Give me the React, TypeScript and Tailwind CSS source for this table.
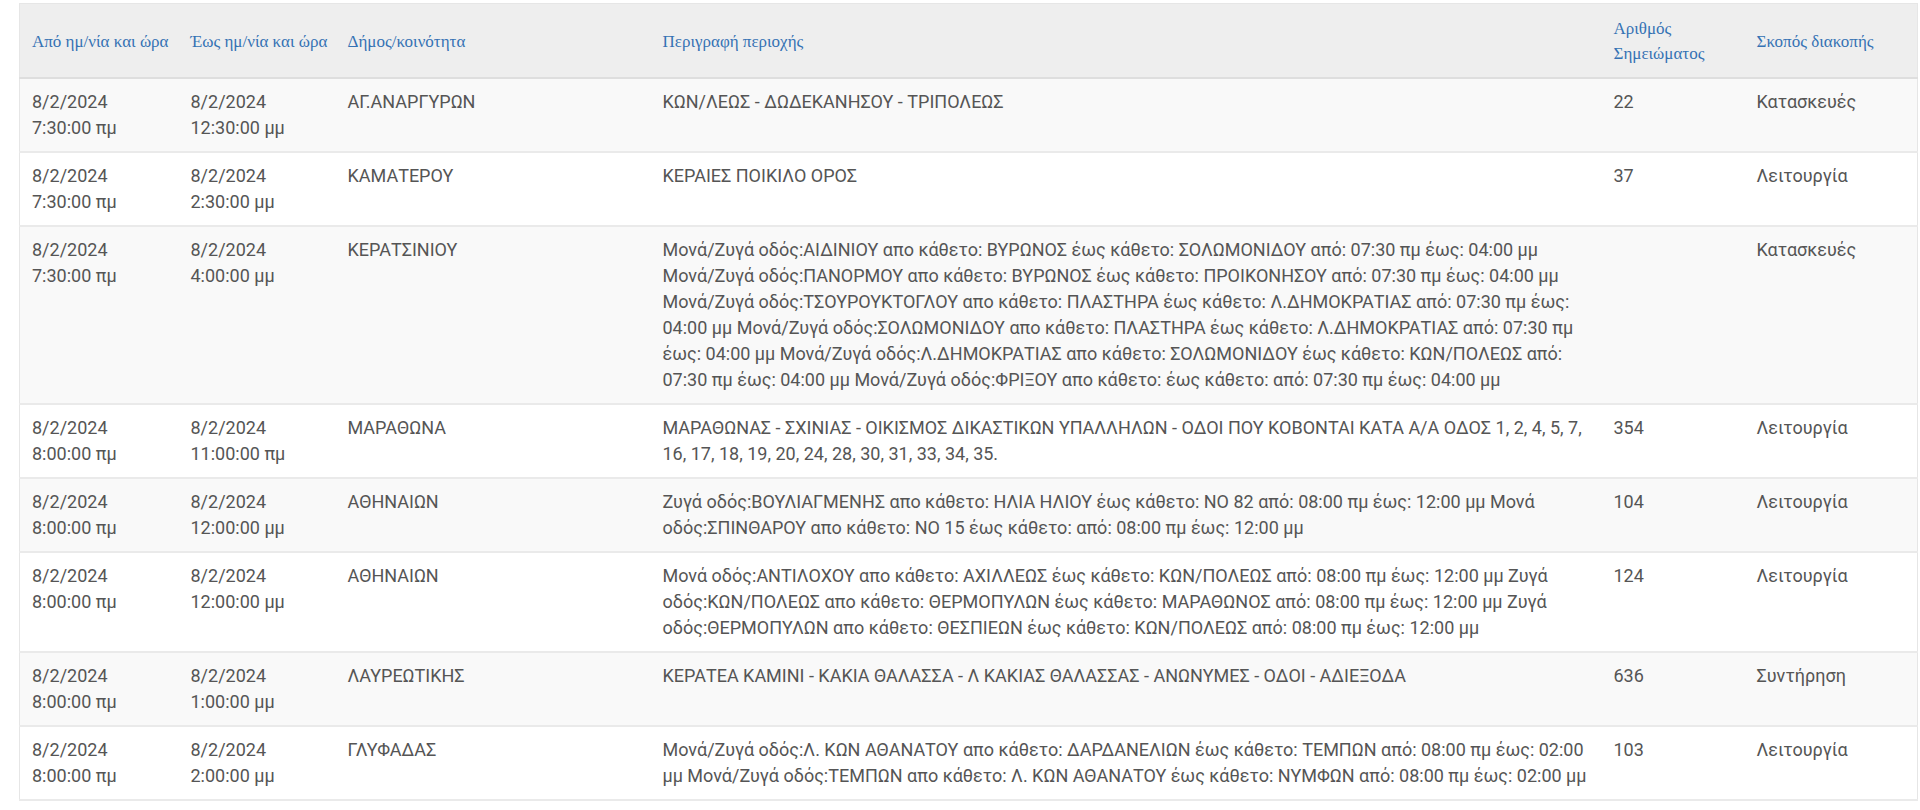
import React from "react";

type Row = {
  from: [string, string];
  to: [string, string];
  dimos: string;
  desc: string;
  num: string;
  purpose: string;
};

const rows: Row[] = [
  {
    from: ["8/2/2024", "7:30:00 πμ"],
    to: ["8/2/2024", "12:30:00 μμ"],
    dimos: "ΑΓ.ΑΝΑΡΓΥΡΩΝ",
    desc: "ΚΩΝ/ΛΕΩΣ - ΔΩΔΕΚΑΝΗΣΟΥ - ΤΡΙΠΟΛΕΩΣ",
    num: "22",
    purpose: "Κατασκευές",
  },
  {
    from: ["8/2/2024", "7:30:00 πμ"],
    to: ["8/2/2024", "2:30:00 μμ"],
    dimos: "ΚΑΜΑΤΕΡΟΥ",
    desc: "ΚΕΡΑΙΕΣ ΠΟΙΚΙΛΟ ΟΡΟΣ",
    num: "37",
    purpose: "Λειτουργία",
  },
  {
    from: ["8/2/2024", "7:30:00 πμ"],
    to: ["8/2/2024", "4:00:00 μμ"],
    dimos: "ΚΕΡΑΤΣΙΝΙΟΥ",
    desc: "Μονά/Ζυγά οδός:ΑΙΔΙΝΙΟΥ απο κάθετο: ΒΥΡΩΝΟΣ έως κάθετο: ΣΟΛΩΜΟΝΙΔΟΥ από: 07:30 πμ έως: 04:00 μμ Μονά/Ζυγά οδός:ΠΑΝΟΡΜΟΥ απο κάθετο: ΒΥΡΩΝΟΣ έως κάθετο: ΠΡΟΙΚΟΝΗΣΟΥ από: 07:30 πμ έως: 04:00 μμ Μονά/Ζυγά οδός:ΤΣΟΥΡΟΥΚΤΟΓΛΟΥ απο κάθετο: ΠΛΑΣΤΗΡΑ έως κάθετο: Λ.ΔΗΜΟΚΡΑΤΙΑΣ από: 07:30 πμ έως: 04:00 μμ Μονά/Ζυγά οδός:ΣΟΛΩΜΟΝΙΔΟΥ απο κάθετο: ΠΛΑΣΤΗΡΑ έως κάθετο: Λ.ΔΗΜΟΚΡΑΤΙΑΣ από: 07:30 πμ έως: 04:00 μμ Μονά/Ζυγά οδός:Λ.ΔΗΜΟΚΡΑΤΙΑΣ απο κάθετο: ΣΟΛΩΜΟΝΙΔΟΥ έως κάθετο: ΚΩΝ/ΠΟΛΕΩΣ από: 07:30 πμ έως: 04:00 μμ Μονά/Ζυγά οδός:ΦΡΙΞΟΥ απο κάθετο: έως κάθετο: από: 07:30 πμ έως: 04:00 μμ",
    num: "",
    purpose: "Κατασκευές",
  },
  {
    from: ["8/2/2024", "8:00:00 πμ"],
    to: ["8/2/2024", "11:00:00 πμ"],
    dimos: "ΜΑΡΑΘΩΝΑ",
    desc: "ΜΑΡΑΘΩΝΑΣ - ΣΧΙΝΙΑΣ - ΟΙΚΙΣΜΟΣ ΔΙΚΑΣΤΙΚΩΝ ΥΠΑΛΛΗΛΩΝ - ΟΔΟΙ ΠΟΥ ΚΟΒΟΝΤΑΙ ΚΑΤΑ Α/Α ΟΔΟΣ 1, 2, 4, 5, 7, 16, 17, 18, 19, 20, 24, 28, 30, 31, 33, 34, 35.",
    num: "354",
    purpose: "Λειτουργία",
  },
  {
    from: ["8/2/2024", "8:00:00 πμ"],
    to: ["8/2/2024", "12:00:00 μμ"],
    dimos: "ΑΘΗΝΑΙΩΝ",
    desc: "Ζυγά οδός:ΒΟΥΛΙΑΓΜΕΝΗΣ απο κάθετο: ΗΛΙΑ ΗΛΙΟΥ έως κάθετο: ΝΟ 82 από: 08:00 πμ έως: 12:00 μμ Μονά οδός:ΣΠΙΝΘΑΡΟΥ απο κάθετο: ΝΟ 15 έως κάθετο: από: 08:00 πμ έως: 12:00 μμ",
    num: "104",
    purpose: "Λειτουργία",
  },
  {
    from: ["8/2/2024", "8:00:00 πμ"],
    to: ["8/2/2024", "12:00:00 μμ"],
    dimos: "ΑΘΗΝΑΙΩΝ",
    desc: "Μονά οδός:ΑΝΤΙΛΟΧΟΥ απο κάθετο: ΑΧΙΛΛΕΩΣ έως κάθετο: ΚΩΝ/ΠΟΛΕΩΣ από: 08:00 πμ έως: 12:00 μμ Ζυγά οδός:ΚΩΝ/ΠΟΛΕΩΣ απο κάθετο: ΘΕΡΜΟΠΥΛΩΝ έως κάθετο: ΜΑΡΑΘΩΝΟΣ από: 08:00 πμ έως: 12:00 μμ Ζυγά οδός:ΘΕΡΜΟΠΥΛΩΝ απο κάθετο: ΘΕΣΠΙΕΩΝ έως κάθετο: ΚΩΝ/ΠΟΛΕΩΣ από: 08:00 πμ έως: 12:00 μμ",
    num: "124",
    purpose: "Λειτουργία",
  },
  {
    from: ["8/2/2024", "8:00:00 πμ"],
    to: ["8/2/2024", "1:00:00 μμ"],
    dimos: "ΛΑΥΡΕΩΤΙΚΗΣ",
    desc: "ΚΕΡΑΤΕΑ ΚΑΜΙΝΙ - ΚΑΚΙΑ ΘΑΛΑΣΣΑ - Λ ΚΑΚΙΑΣ ΘΑΛΑΣΣΑΣ - ΑΝΩΝΥΜΕΣ - ΟΔΟΙ - ΑΔΙΕΞΟΔΑ",
    num: "636",
    purpose: "Συντήρηση",
  },
  {
    from: ["8/2/2024", "8:00:00 πμ"],
    to: ["8/2/2024", "2:00:00 μμ"],
    dimos: "ΓΛΥΦΑΔΑΣ",
    desc: "Μονά/Ζυγά οδός:Λ. ΚΩΝ ΑΘΑΝΑΤΟΥ απο κάθετο: ΔΑΡΔΑΝΕΛΙΩΝ έως κάθετο: ΤΕΜΠΩΝ από: 08:00 πμ έως: 02:00 μμ Μονά/Ζυγά οδός:ΤΕΜΠΩΝ απο κάθετο: Λ. ΚΩΝ ΑΘΑΝΑΤΟΥ έως κάθετο: ΝΥΜΦΩΝ από: 08:00 πμ έως: 02:00 μμ",
    num: "103",
    purpose: "Λειτουργία",
  },
];

const headers = [
  "Από ημ/νία και ώρα",
  "Έως ημ/νία και ώρα",
  "Δήμος/κοινότητα",
  "Περιγραφή περιοχής",
  "Αριθμός Σημειώματος",
  "Σκοπός διακοπής",
];

export default function App() {
  return (
    <div className="min-h-[810px] w-[1920px] bg-white pl-[19px] pr-[3px] pt-[3px]">
      <table className="w-[1898px] table-fixed border-collapse border border-[#e6e6e6]">
        <colgroup>
          <col className="w-[159px]" />
          <col className="w-[157px]" />
          <col className="w-[315px]" />
          <col className="w-[951px]" />
          <col className="w-[143px]" />
          <col className="w-[173px]" />
        </colgroup>
        <thead>
          <tr className="h-[74px] border-b-2 border-[#dedede] bg-[#eeeeee]">
            {headers.map((h) => (
              <th
                key={h}
                className="pt-[8px] pb-[6px] pl-[12px] pr-[2px] text-left align-middle text-[17px] font-normal leading-[25px] text-[#3572b4] [font-family:'Liberation_Serif',serif]"
              >
                {h}
              </th>
            ))}
          </tr>
        </thead>
        <tbody className="text-[18px] leading-[26px] text-[#555555] [font-family:Roboto,'Noto_Sans',sans-serif]">
          {rows.map((r, i) => (
            <tr
              key={i}
              className={`border-b-2 border-[#eaeaea] align-top ${i % 2 === 0 ? "bg-[#f9f9f9]" : "bg-white"}`}
            >
              <td className="pl-[12px] pr-[8px] pt-[10px] pb-[10px]">
                <div>{r.from[0]}</div>
                <div>{r.from[1]}</div>
              </td>
              <td className="pl-[12px] pr-[8px] pt-[10px] pb-[10px]">
                <div>{r.to[0]}</div>
                <div>{r.to[1]}</div>
              </td>
              <td className="pl-[12px] pr-[8px] pt-[10px] pb-[10px]">{r.dimos}</td>
              <td className="pl-[12px] pr-[8px] pt-[10px] pb-[10px]">{r.desc}</td>
              <td className="pl-[12px] pr-[8px] pt-[10px] pb-[10px]">{r.num}</td>
              <td className="pl-[12px] pr-[8px] pt-[10px] pb-[10px]">{r.purpose}</td>
            </tr>
          ))}
        </tbody>
      </table>
    </div>
  );
}
